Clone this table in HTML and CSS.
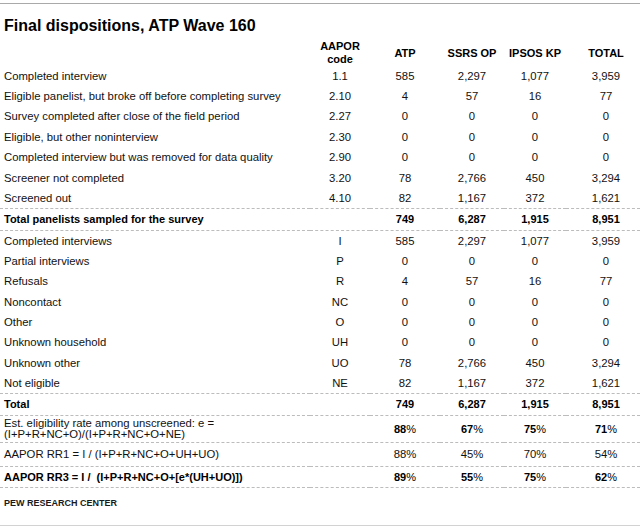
FILE: index.html
```html
<!DOCTYPE html>
<html lang="en">
<head>
<meta charset="utf-8">
<title>Final dispositions, ATP Wave 160</title>
<link rel="stylesheet" href="styles.css">
</head>
<body>
<div class="rule-top"></div>
<h1 class="title">Final dispositions, ATP Wave 160</h1>
<table class="disp">
  <colgroup>
    <col class="c-label"><col class="c-code"><col class="c-atp"><col class="c-ssrs"><col class="c-ipsos"><col class="c-total">
  </colgroup>
  <thead>
    <tr class="head">
      <th class="label"></th>
      <th>AAPOR<br>code</th>
      <th>ATP</th>
      <th>SSRS OP</th>
      <th>IPSOS KP</th>
      <th class="last">TOTAL</th>
    </tr>
  </thead>
  <tbody>
    <tr class="r"><td class="label">Completed interview</td><td>1.1</td><td>585</td><td>2,297</td><td>1,077</td><td class="last">3,959</td></tr>
    <tr class="r"><td class="label">Eligible panelist, but broke off before completing survey</td><td>2.10</td><td>4</td><td>57</td><td>16</td><td class="last">77</td></tr>
    <tr class="r"><td class="label">Survey completed after close of the field period</td><td>2.27</td><td>0</td><td>0</td><td>0</td><td class="last">0</td></tr>
    <tr class="r"><td class="label">Eligible, but other noninterview</td><td>2.30</td><td>0</td><td>0</td><td>0</td><td class="last">0</td></tr>
    <tr class="r"><td class="label">Completed interview but was removed for data quality</td><td>2.90</td><td>0</td><td>0</td><td>0</td><td class="last">0</td></tr>
    <tr class="r"><td class="label">Screener not completed</td><td>3.20</td><td>78</td><td>2,766</td><td>450</td><td class="last">3,294</td></tr>
    <tr class="r"><td class="label">Screened out</td><td>4.10</td><td>82</td><td>1,167</td><td>372</td><td class="last">1,621</td></tr>
    <tr class="tot"><td class="label">Total panelists sampled for the survey</td><td></td><td>749</td><td>6,287</td><td>1,915</td><td class="last">8,951</td></tr>
    <tr class="r"><td class="label">Completed interviews</td><td>I</td><td>585</td><td>2,297</td><td>1,077</td><td class="last">3,959</td></tr>
    <tr class="r"><td class="label">Partial interviews</td><td>P</td><td>0</td><td>0</td><td>0</td><td class="last">0</td></tr>
    <tr class="r"><td class="label">Refusals</td><td>R</td><td>4</td><td>57</td><td>16</td><td class="last">77</td></tr>
    <tr class="r"><td class="label">Noncontact</td><td>NC</td><td>0</td><td>0</td><td>0</td><td class="last">0</td></tr>
    <tr class="r"><td class="label">Other</td><td>O</td><td>0</td><td>0</td><td>0</td><td class="last">0</td></tr>
    <tr class="r"><td class="label">Unknown household</td><td>UH</td><td>0</td><td>0</td><td>0</td><td class="last">0</td></tr>
    <tr class="r"><td class="label">Unknown other</td><td>UO</td><td>78</td><td>2,766</td><td>450</td><td class="last">3,294</td></tr>
    <tr class="r"><td class="label">Not eligible</td><td>NE</td><td>82</td><td>1,167</td><td>372</td><td class="last">1,621</td></tr>
    <tr class="tot"><td class="label">Total</td><td></td><td>749</td><td>6,287</td><td>1,915</td><td class="last">8,951</td></tr>
    <tr class="est"><td class="label">Est. eligibility rate among unscreened: e =<br>(I+P+R+NC+O)/(I+P+R+NC+O+NE)</td><td></td><td class="strong">88<span class="pc">%</span></td><td class="strong">67<span class="pc">%</span></td><td class="strong">75<span class="pc">%</span></td><td class="strong last">71<span class="pc">%</span></td></tr>
    <tr class="rr1"><td class="label">AAPOR RR1 = I / (I+P+R+NC+O+UH+UO)</td><td></td><td>88%</td><td>45%</td><td>70%</td><td class="last">54%</td></tr>
    <tr class="rr3"><td class="label">AAPOR RR3 = I /&nbsp; (I+P+R+NC+O+[e*(UH+UO)])</td><td></td><td class="strong">89<span class="pc">%</span></td><td class="strong">55<span class="pc">%</span></td><td class="strong">75<span class="pc">%</span></td><td class="strong last">62<span class="pc">%</span></td></tr>
  </tbody>
</table>
<div class="source">PEW RESEARCH CENTER</div>
<div class="rule-bottom"></div>
</body>
</html>
```

FILE: styles.css
```css
html, body {
  margin: 0;
  padding: 0;
  background: #ffffff;
}

body {
  width: 640px;
  font-family: "Liberation Sans", Arial, sans-serif;
  color: #111;
}

.rule-top {
  margin-top: 3px;
  border-top: 1px solid #a9a9a9;
}

.title {
  margin: 12px 0 0 4px;
  font-size: 16px;
  line-height: 20px;
  font-weight: bold;
  color: #000;
}

.disp {
  margin-top: 4px;
  width: 640px;
  table-layout: fixed;
  border-collapse: collapse;
  font-size: 11.3px;
}

.c-label { width: 310px; }
.c-code { width: 60px; }
.c-atp { width: 70px; }
.c-ssrs { width: 64px; }
.c-ipsos { width: 62px; }
.c-total { width: 74px; }

.disp th,
.disp td {
  padding: 0;
  line-height: 13px;
  vertical-align: middle;
  text-align: center;
  white-space: nowrap;
}

.disp th {
  font-size: 11px;
  font-weight: bold;
  color: #000;
}

.disp .label {
  text-align: left;
  padding-left: 4px;
}

.disp .last {
  padding-left: 6px;
}

.head {
  height: 26px;
}

.r {
  height: 20.4px;
}

.tot {
  height: 22px;
  font-weight: bold;
  font-size: 11px;
  color: #000;
}

.tot td,
.est td,
.rr1 td,
.rr3 td {
  border-bottom: 1px dashed #bcbcbc;
}

.tot td {
  border-top: 1px dashed #bcbcbc;
}

.est {
  height: 27px;
}

.est .label {
  line-height: 11.5px;
}

.rr1 {
  height: 24px;
}

.rr3 {
  height: 21px;
  font-weight: bold;
  font-size: 11px;
  color: #000;
}

.strong {
  font-weight: bold;
  font-size: 11px;
  color: #000;
}

.pc {
  font-weight: normal;
}

.source {
  margin: 9px 0 0 4px;
  font-size: 9px;
  line-height: 12px;
  font-weight: bold;
  color: #1a1a1a;
}

.rule-bottom {
  margin-top: 16px;
  border-top: 1px solid #d2d2d2;
}
```
